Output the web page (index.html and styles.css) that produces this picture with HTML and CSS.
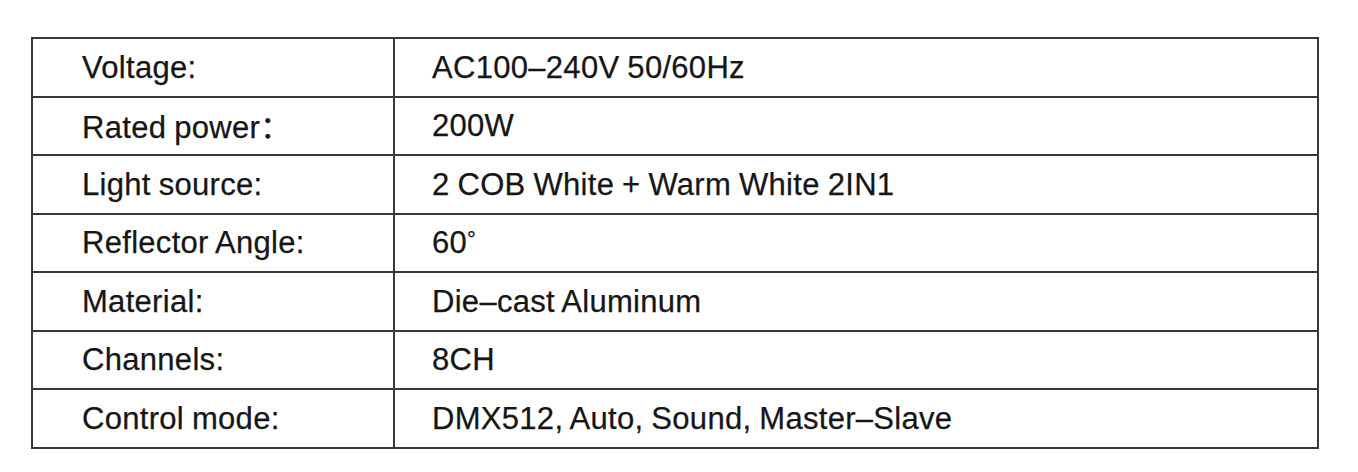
FILE: index.html
```html
<!DOCTYPE html>
<html lang="en">
<head>
<meta charset="utf-8">
<title>Specifications</title>
<link rel="stylesheet" href="styles.css">
</head>
<body>
<table class="spec">
  <tbody>
    <tr><td class="label">Voltage:</td><td class="value">AC100–240V 50/60Hz</td></tr>
    <tr><td class="label">Rated power<span class="wide">：</span></td><td class="value">200W</td></tr>
    <tr><td class="label">Light source:</td><td class="value">2 COB White + Warm White 2IN1</td></tr>
    <tr><td class="label">Reflector Angle:</td><td class="value">60<span class="deg">°</span></td></tr>
    <tr><td class="label">Material:</td><td class="value">Die–cast Aluminum</td></tr>
    <tr><td class="label">Channels:</td><td class="value">8CH</td></tr>
    <tr><td class="label">Control mode:</td><td class="value">DMX512, Auto, Sound, Master–Slave</td></tr>
  </tbody>
</table>
</body>
</html>
```
FILE: styles.css
```css
html, body {
  margin: 0;
  padding: 0;
  background: #ffffff;
}
body {
  padding: 37px 0 0 31px;
  font-family: "Liberation Sans", Arial, sans-serif;
  color: #161616;
}
.spec {
  border-collapse: collapse;
  width: 1288px;
  font-size: 31px;
  letter-spacing: 0.3px;
  word-spacing: -1px;
  line-height: 1;
  -webkit-text-stroke: 0.25px #161616;
}
.spec tr {
  height: 58.5px;
}
.spec td {
  border: 2px solid #383838;
  padding: 0;
  vertical-align: middle;
  white-space: nowrap;
}
.label {
  width: 311px;
  padding-left: 49px !important;
}
.value {
  padding-left: 37px !important;
}
.wide {
  font-family: "Noto Sans CJK SC", sans-serif;
}
.deg {
  font-size: 22px;
  vertical-align: 6px;
}
```
